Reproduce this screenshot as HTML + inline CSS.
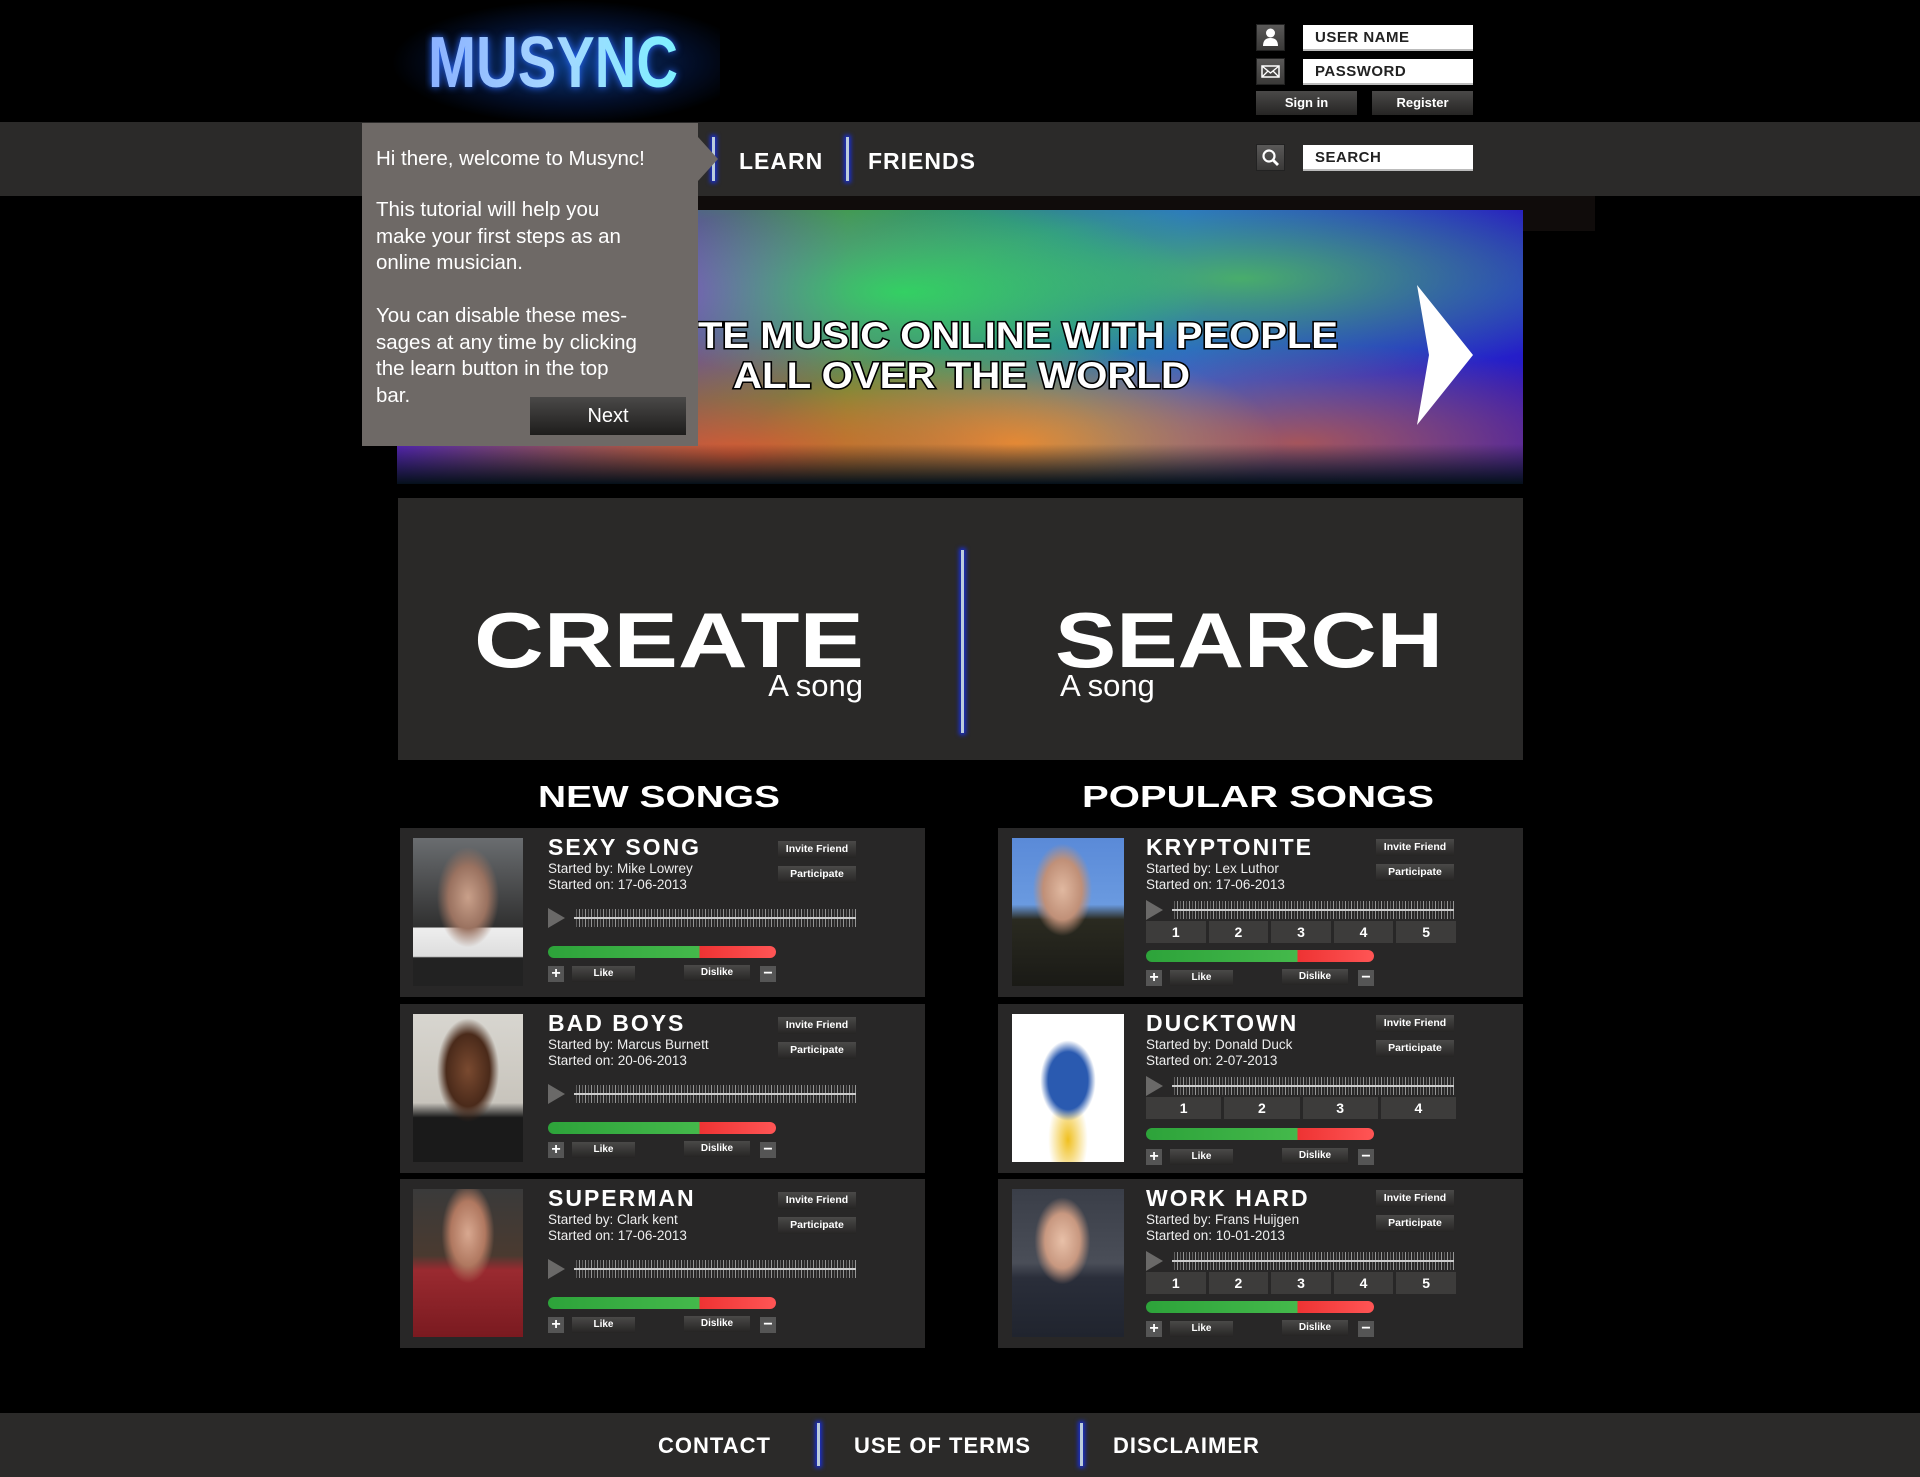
<!DOCTYPE html>
<html><head><meta charset="utf-8"><style>
*{margin:0;padding:0;box-sizing:border-box}
body{width:1920px;height:1477px;background:#000;position:relative;overflow:hidden;font-family:"Liberation Sans",sans-serif;color:#fff}
.a{position:absolute}
.hd{font-family:"Liberation Sans",sans-serif;font-weight:bold;letter-spacing:1px}
.ico{background:linear-gradient(#5a5958,#3a3938);border:1px solid #222}
.fld{background:#fff;border-bottom:2px solid #bbb;color:#222;font-weight:bold;font-size:15px;padding-left:12px;line-height:25px;letter-spacing:.5px}
.btn{background:linear-gradient(#4a4948,#262524);color:#fff;font-size:13px;font-weight:bold;text-align:center}
.card{background:#282727;width:525px;height:169px}
.card .ph{position:absolute;left:13px;top:10px;width:110px;height:148px}
.card .t{position:absolute;left:148px;top:6px;font-size:23px;font-weight:bold;letter-spacing:2px}
.card .s{position:absolute;left:148px;top:33px;font-size:13.5px;line-height:16px;color:#eee}
.card .b1,.card .b2{position:absolute;left:378px;width:78px;height:17px;font-size:10.5px;line-height:17px}
.card .b1{top:13px}.card .b2{top:38px}
.card .pl{position:absolute;left:148px;width:0;height:0;border-left:17px solid #6a6968;border-top:10px solid transparent;border-bottom:10px solid transparent}
.card .wv{position:absolute;left:174px;width:282px;height:18px;background:repeating-linear-gradient(90deg,transparent 0 2px,rgba(200,200,200,.35) 2px 3px,transparent 3px 5px,rgba(220,220,220,.6) 5px 6px)}
.card .wv:after{content:"";position:absolute;left:0;right:0;top:8px;height:2px;background:#ccc}
.card .bar{position:absolute;left:148px;width:228px;height:12px;border-radius:6px;background:linear-gradient(90deg,#2da33a 0,#44b94b 66.5%,#e33 66.5%,#f55 100%)}
.card .pm{position:absolute;width:16px;height:16px;background:#555;font-size:16px;line-height:15px;text-align:center;font-weight:bold}
.card .lk,.card .dl{position:absolute;height:16px;font-size:10px;line-height:16px}
.card .lk{left:172px;width:63px}.card .dl{left:284px;width:66px}
.nums{position:absolute;left:148px;width:310px;height:22px;display:flex;gap:3px}
.nums div{flex:1;background:#3d3c3b;text-align:center;font-size:14px;font-weight:bold;line-height:22px}
.vl{position:absolute;width:3px;background:#bcd;box-shadow:0 0 4px 2px #1a2fd0}
.tt{position:absolute;left:376px;font-size:20.5px;line-height:26.5px;color:#fff;white-space:nowrap}
</style></head><body>

<!-- logo -->
<div class="a" style="left:390px;top:0;width:330px;height:125px;background:radial-gradient(ellipse at 55% 50%,rgba(20,100,220,.6),rgba(10,50,140,.3) 45%,transparent 70%)"></div>
<svg class="a" style="left:425px;top:25px" width="260" height="70"><defs><linearGradient id="lg" x1="0" x2="1"><stop offset="0" stop-color="#8ab0ff"/><stop offset=".5" stop-color="#a6d6ff"/><stop offset="1" stop-color="#7ef0ff"/></linearGradient></defs>
<text x="3" y="62" font-family="Liberation Sans" font-weight="bold" font-size="72" textLength="250" lengthAdjust="spacingAndGlyphs" fill="url(#lg)" style="filter:drop-shadow(0 0 4px #2a6aff)">MUSYNC</text></svg>

<!-- login -->
<div class="a ico" style="left:1256px;top:24px;width:29px;height:27px"><svg width="27" height="25"><circle cx="13.5" cy="8" r="4.5" fill="#fff"/><path d="M6 21 Q6 13 13.5 13 Q21 13 21 21Z" fill="#fff"/></svg></div>
<div class="a fld" style="left:1303px;top:25px;width:170px;height:26px">USER NAME</div>
<div class="a ico" style="left:1256px;top:58px;width:29px;height:27px"><svg width="27" height="25"><rect x="5" y="7" width="17" height="11" fill="none" stroke="#fff" stroke-width="1.5"/><path d="M5 7 L13.5 14 L22 7 M5 18 L11 12 M22 18 L16 12" stroke="#fff" stroke-width="1.3" fill="none"/></svg></div>
<div class="a fld" style="left:1303px;top:59px;width:170px;height:26px">PASSWORD</div>
<div class="a btn" style="left:1256px;top:91px;width:101px;height:24px;line-height:24px">Sign in</div>
<div class="a btn" style="left:1372px;top:91px;width:101px;height:24px;line-height:24px">Register</div>

<!-- nav -->
<div class="a" style="left:0;top:122px;width:1920px;height:74px;background:#2b2a29"></div>
<div class="a" style="left:698px;top:196px;width:897px;height:35px;background:#100c0b"></div>
<div class="vl" style="left:712px;top:137px;height:44px"></div>
<div class="a hd" style="left:739px;top:148px;font-size:23px">LEARN</div>
<div class="vl" style="left:846px;top:137px;height:44px"></div>
<div class="a hd" style="left:868px;top:148px;font-size:23px">FRIENDS</div>
<div class="a ico" style="left:1256px;top:144px;width:29px;height:27px"><svg width="27" height="25"><circle cx="12" cy="11" r="5.5" fill="none" stroke="#fff" stroke-width="2.2"/><path d="M16 15 L21 20" stroke="#fff" stroke-width="2.8"/></svg></div>
<div class="a fld" style="left:1303px;top:145px;width:170px;height:26px">SEARCH</div>

<!-- banner -->
<div class="a" style="left:397px;top:210px;width:1126px;height:274px;overflow:hidden;background:
radial-gradient(ellipse at 30% 90%,rgba(255,80,40,.8),transparent 35%),
radial-gradient(ellipse at 55% 85%,rgba(255,160,40,.8),transparent 30%),
radial-gradient(ellipse at 80% 85%,rgba(220,90,40,.7),transparent 30%),
radial-gradient(ellipse at 45% 30%,rgba(40,230,90,.8),transparent 35%),
radial-gradient(ellipse at 75% 25%,rgba(90,220,60,.7),transparent 35%),
radial-gradient(ellipse at 20% 30%,rgba(160,40,230,.9),transparent 40%),
radial-gradient(ellipse at 95% 30%,rgba(30,40,220,.9),transparent 35%),
linear-gradient(90deg,#4020c0,#3aa040 40%,#2060e0 70%,#2818c0)">
<div class="a" style="left:0;right:0;bottom:0;height:40px;background:linear-gradient(transparent,#05101a)"></div>
<svg class="a" style="left:0;top:0" width="1126" height="274">
<text x="301" y="138" font-family="Liberation Sans" font-weight="bold" font-size="37" textLength="640" lengthAdjust="spacingAndGlyphs" fill="#fff" stroke="#000" stroke-width="3" paint-order="stroke">TE MUSIC ONLINE WITH PEOPLE</text>
<text x="336" y="178" font-family="Liberation Sans" font-weight="bold" font-size="37" textLength="457" lengthAdjust="spacingAndGlyphs" fill="#fff" stroke="#000" stroke-width="3" paint-order="stroke">ALL OVER THE WORLD</text>
<path d="M1020 75 L1076 145 L1020 215 L1032 145Z" fill="#fff"/>
</svg>
</div>

<!-- tutorial -->
<div class="a" style="left:362px;top:123px;width:336px;height:323px;background:#6e6966"></div>
<div class="a" style="left:698px;top:137px;width:0;height:0;border-left:20px solid #6e6966;border-top:22px solid transparent;border-bottom:22px solid transparent"></div>
<div class="tt" style="top:146px">Hi there, welcome to Musync!</div>
<div class="tt" style="top:197px">This tutorial will help you<br>make your first steps as an<br>online musician.</div>
<div class="tt" style="top:303px">You can disable these mes-<br>sages at any time by clicking<br>the learn button in the top<br>bar.</div>
<div class="a btn" style="left:530px;top:397px;width:156px;height:38px;line-height:38px;font-size:20px;font-weight:normal;background:linear-gradient(#4a4948,#1e1d1c)">Next</div>

<!-- create/search -->
<div class="a" style="left:398px;top:498px;width:1125px;height:262px;background:#2a2928"></div>
<svg class="a" style="left:0;top:560px" width="1920" height="260">
<text x="474" y="107" font-family="Liberation Sans" font-weight="bold" font-size="78" textLength="390" lengthAdjust="spacingAndGlyphs" fill="#fff">CREATE</text>
<text x="1055" y="107" font-family="Liberation Sans" font-weight="bold" font-size="78" textLength="388" lengthAdjust="spacingAndGlyphs" fill="#fff">SEARCH</text>
<text x="538" y="247" font-family="Liberation Sans" font-weight="bold" font-size="31" textLength="242" lengthAdjust="spacingAndGlyphs" fill="#fff">NEW SONGS</text>
<text x="1082" y="247" font-family="Liberation Sans" font-weight="bold" font-size="31" textLength="352" lengthAdjust="spacingAndGlyphs" fill="#fff">POPULAR SONGS</text>
</svg>
<div class="a" style="left:700px;top:668px;width:163px;text-align:right;font-size:31px">A song</div>
<div class="vl" style="left:961px;top:550px;height:183px"></div>
<div class="a" style="left:1060px;top:668px;font-size:31px">A song</div>

<!-- left cards -->
<div class="a card" style="left:400px;top:828px">
<div class="ph" style="background:radial-gradient(ellipse at 50% 40%,#c9a08a 0,#9a7260 25%,transparent 40%),linear-gradient(#6a6d70,#303030 60%,#eee 61%,#ddd 80%,#222 81%)"></div>
<div class="t">SEXY SONG</div><div class="s">Started by: Mike Lowrey<br>Started on: 17-06-2013</div>
<div class="btn b1">Invite Friend</div><div class="btn b2">Participate</div>
<div class="pl" style="top:80px"></div><div class="wv" style="top:81px"></div>
<div class="bar" style="top:118px"></div>
<div class="pm" style="left:148px;top:138px">+</div><div class="btn lk" style="top:138px">Like</div><div class="btn dl" style="top:137px">Dislike</div><div class="pm" style="left:360px;top:138px">−</div>
</div>
<div class="a card" style="left:400px;top:1004px">
<div class="ph" style="background:radial-gradient(ellipse at 50% 38%,#7a4a30 0,#4a2a1a 28%,transparent 40%),linear-gradient(#d8d6d0,#c8c4bc 60%,#1a1a1a 70%)"></div>
<div class="t">BAD BOYS</div><div class="s">Started by: Marcus Burnett<br>Started on: 20-06-2013</div>
<div class="btn b1">Invite Friend</div><div class="btn b2">Participate</div>
<div class="pl" style="top:80px"></div><div class="wv" style="top:81px"></div>
<div class="bar" style="top:118px"></div>
<div class="pm" style="left:148px;top:138px">+</div><div class="btn lk" style="top:138px">Like</div><div class="btn dl" style="top:137px">Dislike</div><div class="pm" style="left:360px;top:138px">−</div>
</div>
<div class="a card" style="left:400px;top:1179px">
<div class="ph" style="background:radial-gradient(ellipse at 50% 30%,#d8a890 0,#b07860 22%,transparent 34%),linear-gradient(#3a3a3a,#4a3a30 45%,#9a2a30 55%,#7a1a20)"></div>
<div class="t">SUPERMAN</div><div class="s">Started by: Clark kent<br>Started on: 17-06-2013</div>
<div class="btn b1">Invite Friend</div><div class="btn b2">Participate</div>
<div class="pl" style="top:80px"></div><div class="wv" style="top:81px"></div>
<div class="bar" style="top:118px"></div>
<div class="pm" style="left:148px;top:138px">+</div><div class="btn lk" style="top:138px">Like</div><div class="btn dl" style="top:137px">Dislike</div><div class="pm" style="left:360px;top:138px">−</div>
</div>

<!-- right cards -->
<div class="a card" style="left:998px;top:828px">
<div class="ph" style="left:14px;width:112px;background:radial-gradient(ellipse at 45% 35%,#e0b8a0 0,#c09078 22%,transparent 34%),linear-gradient(#5a8ad8,#6a9ae0 45%,#2a2a20 55%,#1a1a16)"></div>
<div class="t">KRYPTONITE</div><div class="s">Started by: Lex Luthor<br>Started on: 17-06-2013</div>
<div class="btn b1" style="top:11px">Invite Friend</div><div class="btn b2" style="top:36px">Participate</div>
<div class="pl" style="top:72px"></div><div class="wv" style="top:73px"></div>
<div class="nums" style="top:93px"><div>1</div><div>2</div><div>3</div><div>4</div><div>5</div></div>
<div class="bar" style="top:122px"></div>
<div class="pm" style="left:148px;top:142px">+</div><div class="btn lk" style="top:142px">Like</div><div class="btn dl" style="top:141px">Dislike</div><div class="pm" style="left:360px;top:142px">−</div>
</div>
<div class="a card" style="left:998px;top:1004px">
<div class="ph" style="left:14px;width:112px;background:radial-gradient(ellipse at 50% 45%,#2a5ab0 0,#2a5ab0 25%,transparent 35%),radial-gradient(ellipse at 50% 85%,#f0c020 0,transparent 25%),#fff"></div>
<div class="t">DUCKTOWN</div><div class="s">Started by: Donald Duck<br>Started on: 2-07-2013</div>
<div class="btn b1" style="top:11px">Invite Friend</div><div class="btn b2" style="top:36px">Participate</div>
<div class="pl" style="top:72px"></div><div class="wv" style="top:73px"></div>
<div class="nums" style="top:93px"><div>1</div><div>2</div><div>3</div><div>4</div></div>
<div class="bar" style="top:124px"></div>
<div class="pm" style="left:148px;top:145px">+</div><div class="btn lk" style="top:145px">Like</div><div class="btn dl" style="top:144px">Dislike</div><div class="pm" style="left:360px;top:145px">−</div>
</div>
<div class="a card" style="left:998px;top:1179px">
<div class="ph" style="left:14px;width:112px;background:radial-gradient(ellipse at 45% 35%,#e8c0a8 0,#c89880 20%,transparent 32%),linear-gradient(#3a3e48,#4a4e58 50%,#2a2e3a 60%,#20242e)"></div>
<div class="t">WORK HARD</div><div class="s">Started by: Frans Huijgen<br>Started on: 10-01-2013</div>
<div class="btn b1" style="top:11px">Invite Friend</div><div class="btn b2" style="top:36px">Participate</div>
<div class="pl" style="top:72px"></div><div class="wv" style="top:73px"></div>
<div class="nums" style="top:93px"><div>1</div><div>2</div><div>3</div><div>4</div><div>5</div></div>
<div class="bar" style="top:122px"></div>
<div class="pm" style="left:148px;top:142px">+</div><div class="btn lk" style="top:142px">Like</div><div class="btn dl" style="top:141px">Dislike</div><div class="pm" style="left:360px;top:142px">−</div>
</div>

<!-- footer -->
<div class="a" style="left:0;top:1413px;width:1920px;height:64px;background:#2b2a29"></div>
<div class="a hd" style="left:658px;top:1433px;font-size:22px">CONTACT</div>
<div class="vl" style="left:817px;top:1423px;height:43px"></div>
<div class="a hd" style="left:854px;top:1433px;font-size:22px">USE OF TERMS</div>
<div class="vl" style="left:1080px;top:1423px;height:43px"></div>
<div class="a hd" style="left:1113px;top:1433px;font-size:22px">DISCLAIMER</div>
</body></html>
